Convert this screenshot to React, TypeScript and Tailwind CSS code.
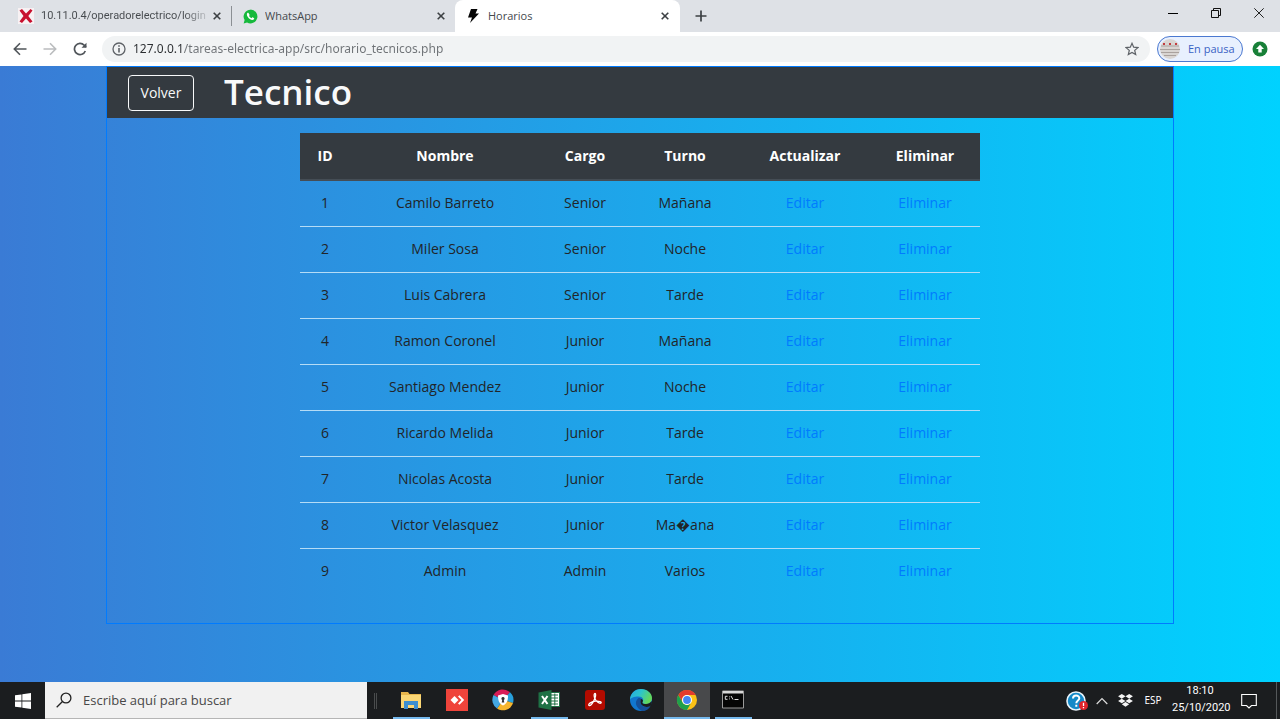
import type { ReactNode } from "react";

type Technician = { id: number; nombre: string; cargo: string; turno: string };

const technicians: Technician[] = [
  { id: 1, nombre: "Camilo Barreto", cargo: "Senior", turno: "Mañana" },
  { id: 2, nombre: "Miler Sosa", cargo: "Senior", turno: "Noche" },
  { id: 3, nombre: "Luis Cabrera", cargo: "Senior", turno: "Tarde" },
  { id: 4, nombre: "Ramon Coronel", cargo: "Junior", turno: "Mañana" },
  { id: 5, nombre: "Santiago Mendez", cargo: "Junior", turno: "Noche" },
  { id: 6, nombre: "Ricardo Melida", cargo: "Junior", turno: "Tarde" },
  { id: 7, nombre: "Nicolas Acosta", cargo: "Junior", turno: "Tarde" },
  { id: 8, nombre: "Victor Velasquez", cargo: "Junior", turno: "Ma\uFFFDana" },
  { id: 9, nombre: "Admin", cargo: "Admin", turno: "Varios" },
];

const headings = ["ID", "Nombre", "Cargo", "Turno", "Actualizar", "Eliminar"];

function CloseGlyph() {
  return (
    <svg viewBox="0 0 8 8" className="size-2" stroke="#3c4043" strokeWidth="1.6">
      <path d="M.7.7l6.6 6.6M7.3.7L.7 7.3" />
    </svg>
  );
}

function Tab({ icon, title, active = false, fade = false }: { icon: ReactNode; title: string; active?: boolean; fade?: boolean }) {
  return (
    <div className={active ? "flex h-8 w-[225px] items-center rounded-t-lg bg-white pr-[7px] pl-2.5" : "flex h-8 w-[223px] items-center pr-1.5 pl-2.5"}>
      <span className="flex w-4 justify-center">{icon}</span>
      <span
        className={
          fade
            ? "ml-[7px] flex-1 overflow-hidden bg-gradient-to-r from-[#45494d] from-85% to-[#cfd2d7] to-100% bg-clip-text font-[Roboto] text-[11px] whitespace-nowrap text-transparent"
            : "ml-[7px] flex-1 overflow-hidden text-[11px] whitespace-nowrap text-[#45494d]"
        }
      >
        {title}
      </span>
      <button aria-label={"Cerrar " + title} className="flex size-4 shrink-0 items-center justify-center">
        <CloseGlyph />
      </button>
    </div>
  );
}

function TabStrip() {
  return (
    <div className="flex h-8 items-center bg-[#dee1e6]">
      <div className="pl-2">
        <Tab
          fade
          title="10.11.0.4/operadorelectrico/login"
          icon={
            <svg viewBox="0 0 16 16" className="size-4 shrink-0">
              <rect width="16" height="16" fill="#f7f1f3" />
              <path d="M1.500 2.500L4 1l4 4.500L12.500 1l2 1.500L10.300 8l4.200 5.500-2.500 1.500-4-4.500L4 15l-2.500-1.500L5.500 8z" fill="#c8102e" />
            </svg>
          }
        />
      </div>
      <span className="h-5 w-px bg-[#8b8f94]" />
      <Tab
        title="WhatsApp"
        icon={
          <svg viewBox="0 0 24 24" className="size-[15px]">
            <path d="M12 1a11 11 0 0 0-9.400 16.700L1 23l5.500-1.500A11 11 0 1 0 12 1z" fill="#16b93c" />
            <path d="M8.800 6.500c-.5-.8-1.200-.8-1.800-.2-3 3 2.500 10.700 8 11.200 1.800 0 3-1.200 2.900-2.700-.1-.5-2.700-1.700-3-1.600l-1.400 1.600c-1.700-.6-3-1.900-3.900-3.500l1.100-1.700z" fill="#fff" />
          </svg>
        }
      />
      <Tab
        active
        title="Horarios"
        icon={
          <svg viewBox="0 0 11 14" className="h-3.5 w-[11px]">
            <path d="M3 0h6.500L7.500 4.500H11L2 14l2-5.500H0z" fill="#050505" />
          </svg>
        }
      />
      <button aria-label="Nueva pestaña" className="ml-[7px] flex size-7 items-center justify-center">
        <svg viewBox="0 0 12 12" className="size-3" stroke="#3c4043" strokeWidth="1.700">
          <path d="M6 .5v11M.5 6h11" />
        </svg>
      </button>
      <div className="ml-auto flex items-center pb-1.5">
        <button aria-label="Minimizar" className="flex h-7 w-[43px] items-center justify-center">
          <span className="h-px w-2.5 bg-black" />
        </button>
        <button aria-label="Restaurar" className="flex h-7 w-[43px] items-center justify-center">
          <svg viewBox="0 0 10 10" className="size-2.5" fill="none" stroke="#111">
            <path d="M.5 2.500h7v7h-7zM2.500 2.500v-2h7v7h-2" />
          </svg>
        </button>
        <button aria-label="Cerrar ventana" className="flex h-7 w-[43px] items-center justify-center">
          <svg viewBox="0 0 10 10" className="size-2.5" stroke="#222">
            <path d="M.3.3l9.400 9.400M9.700.3L.3 9.700" />
          </svg>
        </button>
      </div>
    </div>
  );
}

function Toolbar() {
  return (
    <div className="flex h-[34px] items-center bg-white px-3">
      <button aria-label="Atrás" className="flex size-4 items-center justify-center">
        <svg viewBox="0 0 14 14" className="size-3.5" fill="none" stroke="#50555a" strokeWidth="1.600">
          <path d="M13.500 7H1.500M7 1.200L1.300 7 7 12.800" />
        </svg>
      </button>
      <button aria-label="Adelante" className="ml-3.5 flex size-4 items-center justify-center">
        <svg viewBox="0 0 14 14" className="size-3.5" fill="none" stroke="#babcbe" strokeWidth="1.600">
          <path d="M.5 7h12M7 1.200L12.700 7 7 12.800" />
        </svg>
      </button>
      <button aria-label="Recargar" className="ml-3.5 flex size-4 items-center justify-center">
        <svg viewBox="0 0 14 14" className="size-3.5" fill="none" stroke="#50555a" strokeWidth="1.700">
          <path d="M12.300 9A5.600 5.600 0 1 1 11.200 3.200L13 5" />
          <path d="M13.500.8v5h-5z" fill="#50555a" stroke="none" />
        </svg>
      </button>
      <div className="ml-3.5 flex h-[26px] flex-1 items-center rounded-full bg-[#f1f3f4] px-2.5">
        <svg viewBox="0 0 14 14" className="size-3.5 shrink-0" fill="none" stroke="#5f6368" strokeWidth="1.300">
          <circle cx="7" cy="7" r="6" />
          <path d="M7 6v4.500M7 3.300v1.500" strokeWidth="1.600" />
        </svg>
        <input
          aria-label="Dirección"
          defaultValue="127.0.0.1/tareas-electrica-app/src/horario_tecnicos.php"
          className="ml-[7px] flex-1 bg-[linear-gradient(to_right,#2b2e31_51px,#6e7276_51px)] bg-clip-text font-['Noto_Sans'] text-[12px] text-transparent outline-none"
        />
        <button aria-label="Añadir a marcadores" className="flex size-4 items-center justify-center">
          <svg viewBox="0 0 14 14" className="size-3.5" fill="none" stroke="#5f6368" strokeWidth="1.200">
            <path d="M7 1.300l1.700 3.900 4.200.4-3.200 2.800 1 4.200L7 10.400l-3.700 2.200 1-4.200L1.100 5.600l4.200-.4z" />
          </svg>
        </button>
      </div>
      <button className="ml-[7px] flex h-[26px] w-[86px] items-center rounded-full border border-[#4a78d0] bg-[#e8f0fe] pl-0.5 text-[11px] text-[#3a62c4]">
        <svg viewBox="0 0 20 20" className="mr-2 size-5 shrink-0">
          <circle cx="10" cy="10" r="10" fill="#d9d5d2" />
          <path d="M1 7h18M0 10.500h20M1 13.500h18M4 16.500h12" stroke="#aaa29e" />
          <path d="M3 5h2M9 5h2M15 5h2" stroke="#c23c40" strokeWidth="2" />
        </svg>
        En pausa
      </button>
      <button aria-label="Actualizar Chrome" className="ml-[9px] flex size-4 items-center justify-center">
        <svg viewBox="0 0 16 16" className="size-4">
          <circle cx="8" cy="8" r="7.500" fill="#188038" />
          <path d="M8 3.700L4 8h2.300v3.500h3.400V8H12z" fill="#fff" />
        </svg>
      </button>
    </div>
  );
}

function Schedule() {
  return (
    <main className="flex-1 bg-linear-to-r/srgb from-[#3a7bd5] to-[#00d2ff] px-[106px]">
      <section className="border border-[#007bff] pb-[29px]">
        <header className="flex h-[51px] items-center bg-[#343a40] pl-[21px]">
          <button className="h-9 w-[66px] rounded border border-[#f8f9fa] text-sm text-[#f8f9fa]">Volver</button>
          <h1 className="ml-[30px] pb-0.5 text-[35px] leading-none font-semibold text-[#f8f9fa]">Tecnico</h1>
        </header>
        <table className="mx-auto mt-[15px] w-[680px] table-fixed border-collapse text-center text-sm text-[#212529]">
          <colgroup>
            <col className="w-[50px]" />
            <col className="w-[190px]" />
            <col className="w-[90px]" />
            <col className="w-[110px]" />
            <col className="w-[130px]" />
            <col className="w-[110px]" />
          </colgroup>
          <thead>
            <tr className="h-[47px] border-b-2 border-[#454d55] bg-[#343a40] text-white">
              {headings.map((h) => (
                <th key={h} scope="col" className="font-bold">{h}</th>
              ))}
            </tr>
          </thead>
          <tbody>
            {technicians.map((t) => (
              <tr key={t.id} className="h-[46px] border-b border-[#b5dcf6] last:border-b-0">
                <td>{t.id}</td>
                <td>{t.nombre}</td>
                <td>{t.cargo}</td>
                <td>{t.turno}</td>
                <td><a href="#editar" className="text-[#007bff]">Editar</a></td>
                <td><a href="#eliminar" className="text-[#007bff]">Eliminar</a></td>
              </tr>
            ))}
          </tbody>
        </table>
      </section>
    </main>
  );
}

function TaskButton({ label, children, state = "idle" }: { label: string; children: ReactNode; state?: "idle" | "open" | "active" }) {
  return (
    <button
      aria-label={label}
      className={
        state === "active"
          ? "flex h-full w-[46px] flex-col items-center justify-between bg-[#48494b] pt-[7px]"
          : "flex h-full w-[46px] flex-col items-center justify-between pt-[7px]"
      }
    >
      {children}
      <span className={state === "active" ? "h-0.5 w-full bg-[#76b9ed]" : state === "open" ? "h-0.5 w-[37px] bg-[#76b9ed]" : "h-0.5"} />
    </button>
  );
}

function Taskbar() {
  return (
    <footer className="flex h-[37px] items-center bg-[#1b1d1f] text-white">
      <button aria-label="Inicio" className="flex h-full w-[45px] items-center justify-center">
        <svg viewBox="0 0 16 16" className="size-4" fill="#fff">
          <path d="M0 2.300L6.500 1.400v6.200H0zM7.300 1.300L16 0v7.600H7.300zM0 8.400h6.500v6.200L0 13.700zM7.300 8.400H16V16l-8.700-1.300z" />
        </svg>
      </button>
      <label className="flex h-full w-[322px] items-center border-b border-[#b5b5b5] bg-[#f1f1f1] pl-[11px]">
        <svg viewBox="0 0 16 16" className="size-4 shrink-0" fill="none" stroke="#222" strokeWidth="1.300">
          <circle cx="10" cy="6" r="4.900" />
          <path d="M6.500 9.500L.7 15.300" />
        </svg>
        <input
          aria-label="Buscar"
          placeholder="Escribe aquí para buscar"
          className="ml-[11px] w-full bg-transparent pt-0.5 text-[13px] outline-none placeholder:text-[#484848]"
        />
      </label>
      <span className="mr-[11px] ml-[7px] h-4 w-[3px] border-x border-[#4a4c4d]" />
      <div className="flex h-full">
        <TaskButton label="Explorador de archivos" state="open">
          <svg viewBox="0 0 22 22" className="size-[22px]">
            <path d="M1 3h7l1.500 2H21v14H1z" fill="#e8b64c" />
            <path d="M1 6h20v13H1z" fill="#fbd775" />
            <path d="M4 20v-8h14v8h-4v-4H8v4z" fill="#3d8fd0" />
          </svg>
        </TaskButton>
        <TaskButton label="AnyDesk">
          <svg viewBox="0 0 22 22" className="size-[22px]">
            <rect width="22" height="22" fill="#ef443b" />
            <path d="M8.500 7L12.500 11l-4 4-4-4z" fill="#fff" />
            <path d="M12 7.500l1.500-1.200L18.200 11l-4.700 4.700L12 14.500l3.400-3.500z" fill="#fff" />
          </svg>
        </TaskButton>
        <TaskButton label="Navegador seguro">
          <svg viewBox="0 0 22 22" className="size-[22px]">
            <path d="M1.500 6A10.500 10.500 0 0 1 18 3.300L11 11z" fill="#d91d57" />
            <path d="M18 3.300A10.500 10.500 0 0 1 21 14l-10-3z" fill="#27a0dc" />
            <path d="M21 14A10.500 10.500 0 0 1 5 19.500L11 11z" fill="#f5b52e" />
            <path d="M1.500 6A10.500 10.500 0 0 0 5 19.500L11 11z" fill="#45a8e2" />
            <path d="M11 5l5 1.500c0 5-1 8-5 10-4-2-5-5-5-10z" fill="#fff" />
            <path d="M11 8a1.600 1.600 0 0 0-.8 3l-.5 2.500h2.600l-.5-2.500a1.600 1.600 0 0 0-.8-3z" fill="#333" />
          </svg>
        </TaskButton>
        <TaskButton label="Excel" state="open">
          <svg viewBox="0 0 22 22" className="size-[22px]">
            <path d="M12 3.500h9.500v14H12z" fill="#fff" stroke="#1e7145" />
            <path d="M13 6h7M13 9h7M13 12h7M13 15h7M16.800 4.500v12" stroke="#1e7145" />
            <path d="M.5 3.500L13.500 1v20L.5 18.500z" fill="#1e7145" />
            <path d="M4 7l5.500 8M9.500 7L4 15" stroke="#fff" strokeWidth="2" />
          </svg>
        </TaskButton>
        <TaskButton label="Acrobat Reader">
          <svg viewBox="0 0 22 22" className="size-[22px]">
            <rect x="1" y="1" width="20" height="20" rx="3" fill="#b30b00" />
            <path d="M5 16.500c-1.500-1.500 3-4 6.500-4.300s6.500.5 5.500 1.800c-1.500 1-5.500-1.800-6.500-5.500-.7-2.500-.3-4 .5-4s1 2-.2 5c-1.300 3.600-4 8-5.800 7z" fill="none" stroke="#fff" strokeWidth="1.300" />
          </svg>
        </TaskButton>
        <TaskButton label="Edge">
          <svg viewBox="0 0 22 22" className="size-[22px]">
            <defs>
              <linearGradient id="edge-top" x1="0" x2="1" y1="0" y2=".4">
                <stop offset="0" stopColor="#25a9e5" />
                <stop offset=".5" stopColor="#2cc4cc" />
                <stop offset="1" stopColor="#63d85c" />
              </linearGradient>
            </defs>
            <circle cx="11" cy="11" r="11" fill="#1177cf" />
            <path d="M0 11C0 4.500 5 0 11 0s11 4 11 9c0 4-3 6-6 6-2.500 0-4-.8-3.500-2 1.700-2 .5-5.500-4-5.500S.5 9 0 11z" fill="url(#edge-top)" />
            <path d="M8 9.500C4 13 6 19 12 21.900c4 0 7-2 8.500-5-4 2.500-10 .7-10-3.900 0-1.500.5-2.500.2-3.300-.5-.8-1.700-.9-2.700-.2z" fill="#155099" />
            <path d="M12.500 13c-.5 1.200 1 2 3.500 2 2.300 0 4.500-1 5.500-3 .8 2 .2 3.500-1 4.900-4.500 2.500-10 .1-10-3.900 0-1.500.4-2.300.3-3.200 2.200.7 2.700 2.100 1.700 3.200z" fill="#1b1d1f" />
          </svg>
        </TaskButton>
        <TaskButton label="Chrome" state="active">
          <svg viewBox="0 0 22 22" className="size-[22px]">
            <circle cx="11" cy="11" r="10" fill="#fbc116" />
            <path d="M2.300 6A10 10 0 0 1 19.700 6H11a5 5 0 0 0-4.300 7.500z" fill="#e33b2e" />
            <path d="M2.300 6A10 10 0 0 0 11 21l4.300-7.500a5 5 0 0 1-8.600 0z" fill="#1fa04b" />
            <circle cx="11" cy="11" r="5" fill="#fff" />
            <circle cx="11" cy="11" r="3.900" fill="#4285f4" />
          </svg>
        </TaskButton>
        <TaskButton label="Símbolo del sistema" state="open">
          <svg viewBox="0 0 22 22" className="size-[22px]">
            <path d="M.5 2h21v17H.5z" fill="#050505" stroke="#9a9a9a" />
            <path d="M1 2h20v2.500H1z" fill="#d8d8d8" />
            <path d="M5.500 7.300H3.300v3h2.200M7.500 7.500v.8M7.500 9.500v.8M9 7l2 3.500M12.500 10.500h4" stroke="#ddd" fill="none" />
          </svg>
        </TaskButton>
      </div>
      <div className="ml-auto flex h-full items-center">
        <button aria-label="Ayuda" className="flex w-[22px] justify-center">
          <svg viewBox="0 0 22 20" className="h-5 w-[22px]">
            <circle cx="10" cy="10" r="9" fill="#1489c8" stroke="#e8f3fa" strokeWidth="1.600" />
            <path d="M7 7.500c0-4 6.300-3.700 6.300-.3 0 2.300-3 2.200-3 5M10.300 13.800v2" stroke="#fff" strokeWidth="2" fill="none" />
            <circle cx="17.500" cy="14.500" r="4.500" fill="#e0242b" />
            <path d="M17.500 11.800v3.200M17.500 16v1.300" stroke="#fff" strokeWidth="1.300" />
          </svg>
        </button>
        <button aria-label="Mostrar iconos ocultos" className="ml-2 flex w-3 justify-center">
          <svg viewBox="0 0 12 8" className="h-2 w-3" fill="none" stroke="#ddd" strokeWidth="1.200">
            <path d="M.7 7L6 1.500 11.300 7" />
          </svg>
        </button>
        <button aria-label="Dropbox" className="ml-2.5 flex w-[15px] justify-center">
          <svg viewBox="0 0 16 14" className="h-[13px] w-[15px]" fill="#f4f4f4">
            <path d="M4 0l4 2.500L4 5 0 2.500zM12 0l4 2.500L12 5 8 2.500zM4 5l4 2.500L4 10 0 7.500zM12 5l4 2.500-4 2.500-4-2.500zM8 8.600l4 2.500-4 2.600-4-2.600z" />
          </svg>
        </button>
        <button className="ml-2.5 w-5 text-center font-['Noto_Sans'] text-[10px]">ESP</button>
        <div className="ml-[9px] w-[56px] pb-1 text-center font-[Roboto] text-[11px] leading-[17px] whitespace-nowrap">
          <div>18:10</div>
          <div>25/10/2020</div>
        </div>
        <button aria-label="Notificaciones" className="mr-[19px] ml-[13px] flex w-4 justify-center">
          <svg viewBox="0 0 16 16" className="size-4" fill="none" stroke="#fff" strokeWidth="1.100">
            <path d="M.7 1.500h14.600v11H10.500L8 15l-2.500-2.500H.7z" />
          </svg>
        </button>
        <span className="mr-[3px] h-full w-px bg-[#55585a]" />
      </div>
    </footer>
  );
}

export default function App() {
  return (
    <div className="flex min-h-screen flex-col font-['Open_Sans','Noto_Sans',sans-serif]">
      <TabStrip />
      <Toolbar />
      <Schedule />
      <Taskbar />
    </div>
  );
}
